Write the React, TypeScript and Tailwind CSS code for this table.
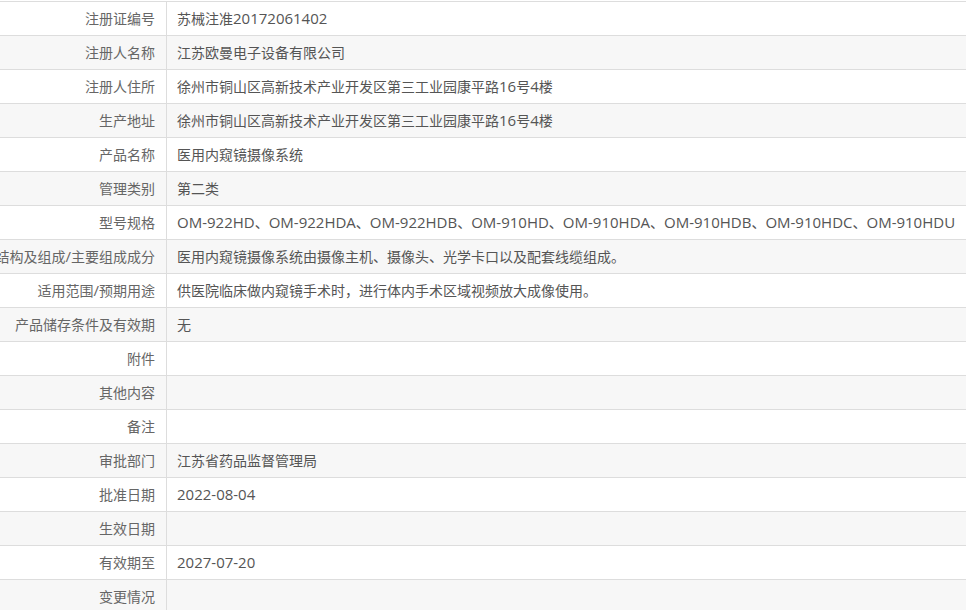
const rows: [string, string][] = [
  ["注册证编号", "苏械注准20172061402"],
  ["注册人名称", "江苏欧曼电子设备有限公司"],
  ["注册人住所", "徐州市铜山区高新技术产业开发区第三工业园康平路16号4楼"],
  ["生产地址", "徐州市铜山区高新技术产业开发区第三工业园康平路16号4楼"],
  ["产品名称", "医用内窥镜摄像系统"],
  ["管理类别", "第二类"],
  ["型号规格", "OM-922HD、OM-922HDA、OM-922HDB、OM-910HD、OM-910HDA、OM-910HDB、OM-910HDC、OM-910HDU"],
  ["结构及组成/主要组成成分", "医用内窥镜摄像系统由摄像主机、摄像头、光学卡口以及配套线缆组成。"],
  ["适用范围/预期用途", "供医院临床做内窥镜手术时，进行体内手术区域视频放大成像使用。"],
  ["产品储存条件及有效期", "无"],
  ["附件", ""],
  ["其他内容", ""],
  ["备注", ""],
  ["审批部门", "江苏省药品监督管理局"],
  ["批准日期", "2022-08-04"],
  ["生效日期", ""],
  ["有效期至", "2027-07-20"],
  ["变更情况", ""],
];

// latin runs render a touch larger than the CJK ones, like YaHei does
function Mixed({ text }: { text: string }) {
  const parts = text.split(/([\x20-\x7e]+)/).filter(Boolean);
  return (
    <span className="whitespace-nowrap">
      {parts.map((p, i) =>
        /^[\x20-\x7e]+$/.test(p) ? (
          <span key={i} className="text-[15px]">
            {p}
          </span>
        ) : (
          <span key={i}>{p}</span>
        )
      )}
    </span>
  );
}

export default function App() {
  return (
    <div
      className="h-[610px] w-[966px] overflow-hidden bg-white pt-px text-[14px] text-[#555]"
      style={{ fontFamily: '"Open Sans", "Noto Sans CJK SC", sans-serif' }}
    >
      <div className="border-t border-[#dddddd]">
        {rows.map(([label, value], i) => (
          <div
            key={label}
            className={`flex h-[34px] border-b border-[#dddddd] ${i % 2 === 1 ? "bg-[#f7f7f7]" : "bg-white"}`}
          >
            <div className="flex w-[167px] shrink-0 items-center justify-end border-r border-[#dddddd] pr-[11px] text-[#666]">
              <Mixed text={label} />
            </div>
            <div className="flex flex-1 items-center pl-[10px]">
              <Mixed text={value} />
            </div>
          </div>
        ))}
      </div>
    </div>
  );
}
